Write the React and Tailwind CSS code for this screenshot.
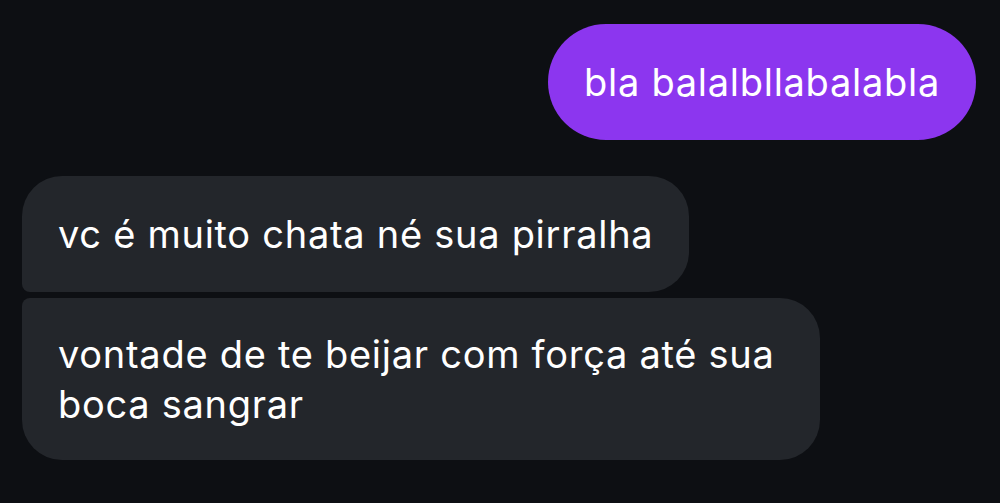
export default function App() {
  return (
    <div
      className="w-[1000px] h-[503px] bg-[#0d0f13] overflow-hidden pt-[24px] pl-[22px] pr-[24px] flex flex-col text-white text-[38px] leading-[50px] tracking-[0.72px]"
      style={{ fontFamily: 'Inter, "Noto Sans", sans-serif' }}
    >
      <div className="self-end bg-[#8c36ef] rounded-full h-[116px] px-[36px] flex items-center">
        bla balalbllabalabla
      </div>

      <div className="mt-[36px] flex flex-col gap-[6px] items-start">
        <div className="bg-[#23262b] rounded-[40px] rounded-bl-[8px] px-[36px] py-[33px]">
          vc é muito chata né sua pirralha
        </div>
        <div className="bg-[#23262b] rounded-[40px] rounded-tl-[8px] px-[36px] py-[31px] max-w-[798px]">
          vontade de te beijar com força até sua boca sangrar
        </div>
      </div>
    </div>
  )
}
